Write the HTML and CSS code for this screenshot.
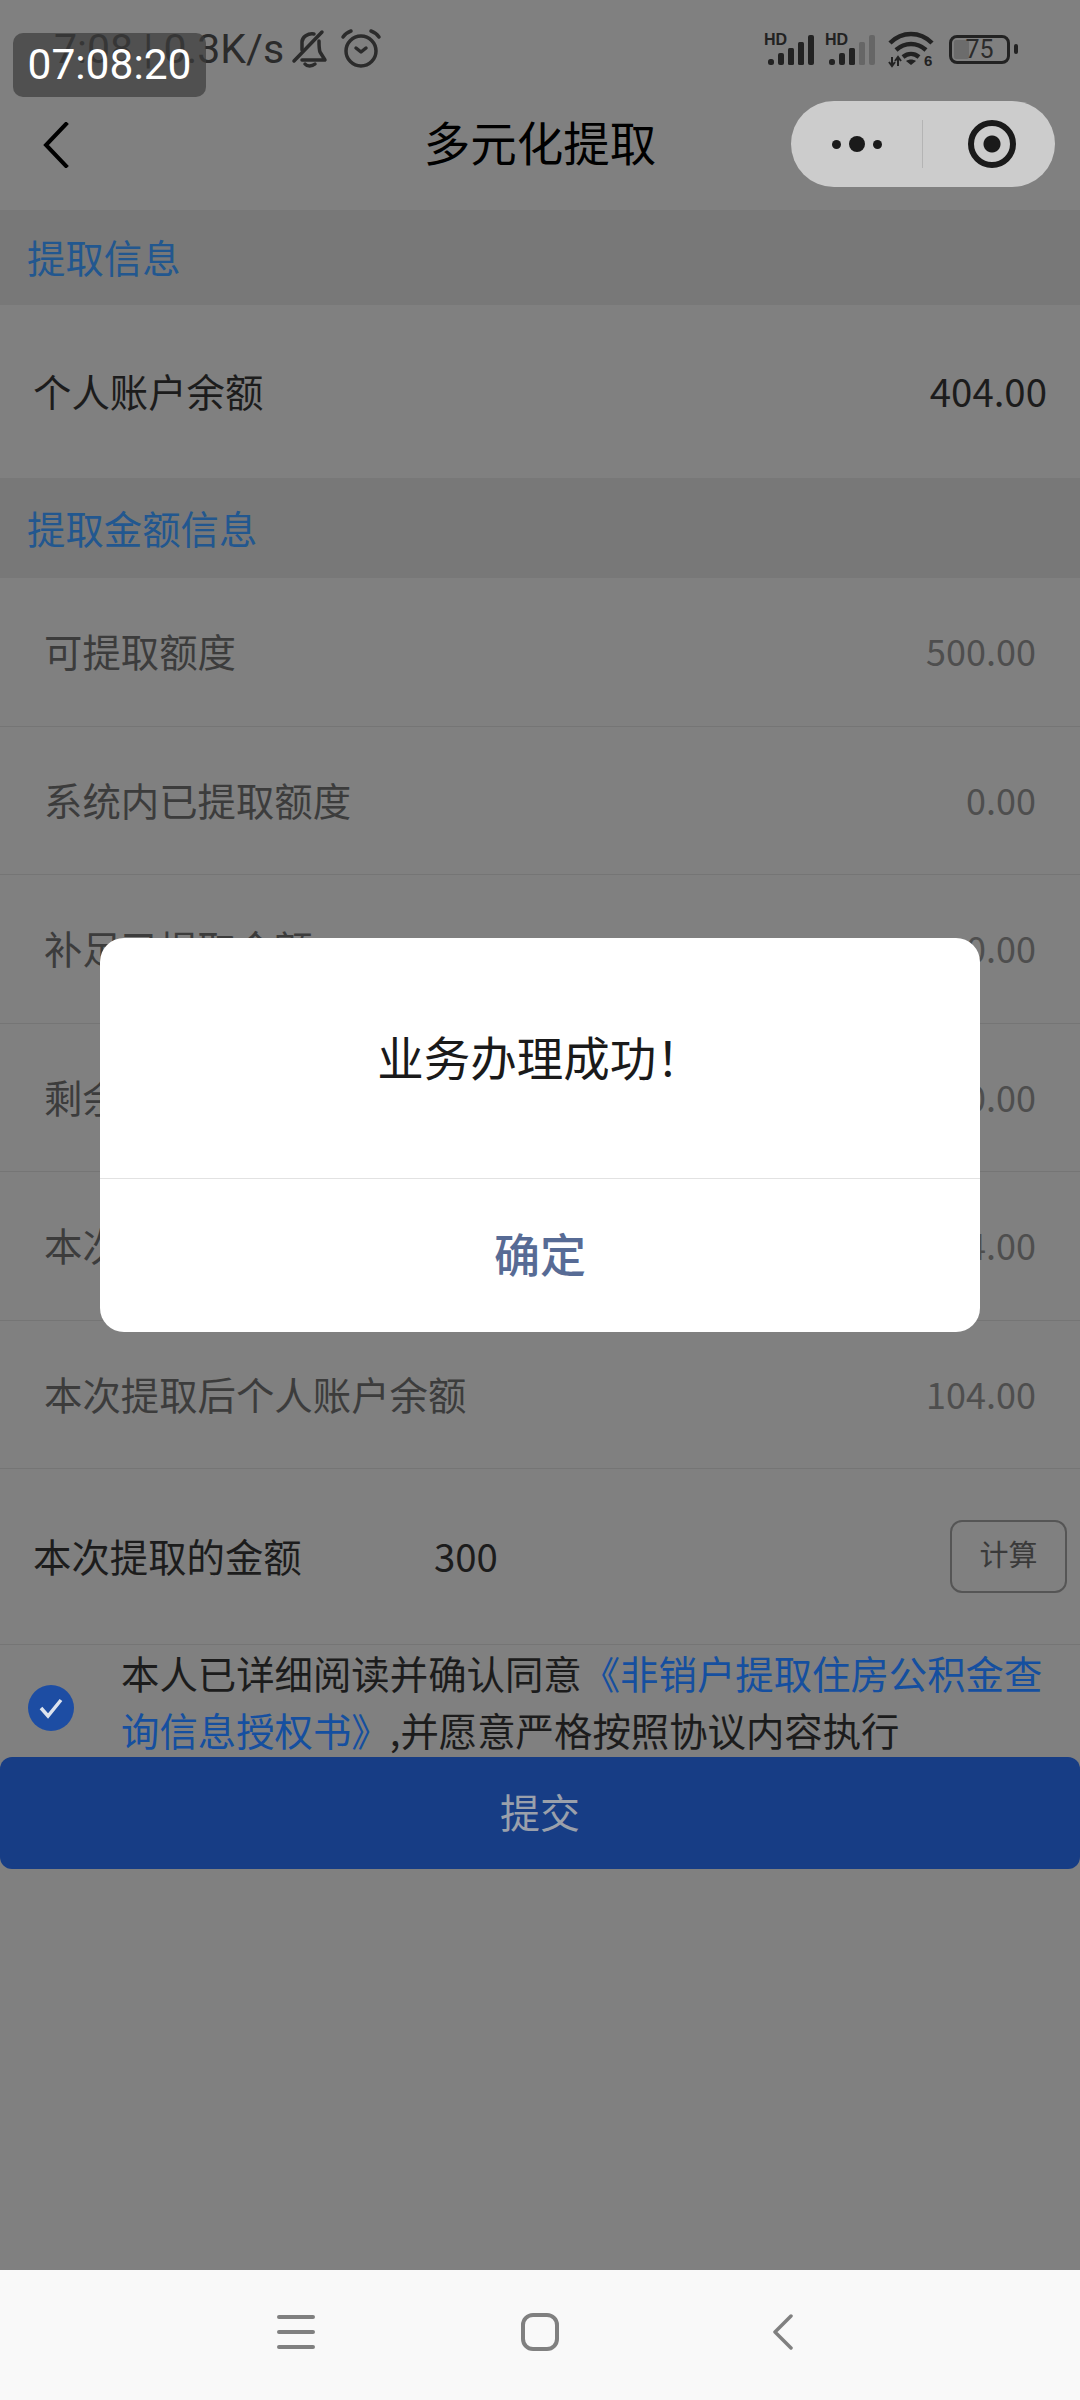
FILE: index.html
```html
<!DOCTYPE html>
<html lang="zh-CN">

<head>
    <meta charset="UTF-8">
    <meta name="viewport" content="width=device-width, initial-scale=1.0">
    <title>多元化提取</title>
    <link rel="stylesheet" href="styles.css">
</head>

<body>
    <div class="page">
        <div class="head">
            <div class="status">
                <div class="status_l">
                    <span class="speed">7:08 | 0.3K/s</span>
                    <svg class="bell" width="36" height="38" viewBox="0 0 36 38" fill="none" stroke="#2b2b2b" stroke-width="3.500" stroke-linecap="round" stroke-linejoin="round">
                        <path d="M10 20v-8c0-5 6-9 12-8"/>
                        <path d="M27 11c0 5 0 8 1 11l5 8H10"/>
                        <path d="M2 31 30 2"/>
                        <path d="M13 34c2 2.500 7 2.500 10 0"/>
                    </svg>
                    <svg class="clock" width="40" height="38" viewBox="0 0 40 38" fill="none" stroke="#2b2b2b" stroke-width="3.500" stroke-linecap="round" stroke-linejoin="round">
                        <circle cx="20" cy="21" r="15"/>
                        <path d="M15 18l5 4 5-4"/>
                        <path d="M2 7c2-3 5-5 8-6M38 7c-2-3-5-5-8-6"/>
                    </svg>
                </div>
                <div class="status_r">
                    <svg width="51" height="32" viewBox="0 0 51 32">
                        <text x="0" y="12" class="hd">HD</text>
                        <rect x="4" y="26" width="6" height="6" rx="2.500" fill="#222"/>
                        <rect x="14" y="20" width="6" height="12" rx="2" fill="#222"/>
                        <rect x="24" y="15" width="6" height="17" rx="1.500" fill="#222"/>
                        <rect x="34" y="9" width="6" height="23" rx="1.500" fill="#222"/>
                        <rect x="44" y="2" width="6" height="30" rx="2" fill="#222"/>
                    </svg>
                    <svg width="51" height="32" viewBox="0 0 51 32">
                        <text x="0" y="12" class="hd">HD</text>
                        <rect x="4" y="26" width="6" height="6" rx="2.500" fill="#222"/>
                        <rect x="14" y="20" width="6" height="12" rx="2" fill="#222"/>
                        <rect x="24" y="15" width="6" height="17" rx="1.500" fill="#222"/>
                        <rect x="34" y="9" width="6" height="23" rx="1.500" fill="#666"/>
                        <rect x="44" y="2" width="6" height="30" rx="2" fill="#666"/>
                    </svg>
                    <svg class="wifi" width="46" height="36" viewBox="0 0 46 36" fill="none" stroke="#222" stroke-width="4.500">
                        <path d="M2 12C14 0 32 0 44 12"/>
                        <path d="M8 19c9-8 21-8 30 0"/>
                        <path d="M15 26c5-4 11-4 16 0"/>
                        <path d="M23 34l-5-4c3-2 7-2 10 0z" fill="#222" stroke="none"/>
                        <path d="M4 26v9M1 31l3 4 3-4M10 35v-9M7 30l3-4 3 4" stroke-width="2"/>
                        <text x="36" y="35" class="six">6</text>
                    </svg>
                    <div class="battery">
                        <div class="battery_box"><i></i><span>75</span></div>
                        <b></b>
                    </div>
                </div>
            </div>
            <div class="nav">
                <svg class="back" width="26" height="46" viewBox="0 0 26 46" fill="none" stroke="#000" stroke-width="4" stroke-linecap="square">
                    <path d="M23 2 3 23l20 21"/>
                </svg>
                <div class="title">多元化提取</div>
            </div>
        </div>

        <div class="section section_a">提取信息</div>
        <div class="row row_big">
            <span>个人账户余额</span>
            <span>404.00</span>
        </div>
        <div class="section section_b">提取金额信息</div>

        <ul class="list">
            <li><span>可提取额度</span><em>500.00</em></li>
            <li><span>系统内已提取额度</span><em>0.00</em></li>
            <li><span>补足已提取金额</span><em>0.00</em></li>
            <li><span>剩余可提取金额</span><em>500.00</em></li>
            <li><span>本次可提取金额</span><em>404.00</em></li>
            <li><span>本次提取后个人账户余额</span><em>104.00</em></li>
        </ul>

        <div class="row row_input">
            <span class="input_label">本次提取的金额</span>
            <span class="input_val">300</span>
            <span class="calc">计算</span>
        </div>

        <div class="agree">
            <svg class="check" width="46" height="46" viewBox="0 0 46 46">
                <circle cx="23" cy="23" r="23" fill="#1d4da3"/>
                <path d="M13 23l7 8 13-16" fill="none" stroke="#dde3ee" stroke-width="3.500"/>
            </svg>
            <p>本人已详细阅读并确认同意<a>《非销户提取住房公积金查询信息授权书》</a>,并愿意严格按照协议内容执行</p>
        </div>

        <div class="submit">提交</div>
    </div>

    <div class="capsule">
        <div class="capsule_l"><i></i><b></b><i></i></div>
        <div class="capsule_r"><span></span></div>
    </div>

    <div class="dialog">
        <div class="dialog_text">业务办理成功！</div>
        <div class="dialog_btn">确定</div>
    </div>

    <div class="timer">07:08:20</div>

    <div class="sysbar">
        <svg width="38" height="36" viewBox="0 0 38 36" stroke="#808080" stroke-width="4" stroke-linecap="round">
            <path d="M2 3h34M2 18h34M2 33h34"/>
        </svg>
        <svg width="38" height="38" viewBox="0 0 38 38" fill="none" stroke="#808080" stroke-width="4">
            <rect x="2" y="2" width="34" height="34" rx="10"/>
        </svg>
        <svg class="sys_back" width="20" height="36" viewBox="0 0 20 36" fill="none" stroke="#808080" stroke-width="3.500" stroke-linecap="round" stroke-linejoin="round">
            <path d="M18 2 2 18l16 16"/>
        </svg>
    </div>
</body>

</html>
```

FILE: styles.css
```css
* {
    margin: 0;
    padding: 0;
    box-sizing: border-box;
}

li {
    list-style: none;
}

em {
    font-style: normal;
}

body {
    position: relative;
    width: 1080px;
    height: 2400px;
    overflow: hidden;
    background-color: #808080;
    font-family: "Noto Sans CJK SC", "Noto Sans", sans-serif;
    font-size: 38.400px;
    color: #1c1c1c;
}

.page {
    display: flex;
    flex-direction: column;
    height: 2270px;
}

.head {
    height: 210px;
}

.status {
    display: flex;
    justify-content: space-between;
    align-items: center;
    height: 98px;
    padding: 0 62px 0 54px;
}

.status svg {
    overflow: visible;
}

.status_l {
    display: flex;
    align-items: center;
    font-family: Roboto, sans-serif;
    font-size: 41px;
    color: #2b2b2b;
}

.bell {
    margin-left: 8px;
}

.clock {
    margin-left: 13px;
}

.status_r {
    display: flex;
    align-items: center;
    gap: 10px;
}

.hd {
    font-family: "Liberation Sans", sans-serif;
    font-size: 16px;
    font-weight: 700;
    fill: #222;
}

.six {
    font-family: "Liberation Sans", sans-serif;
    font-size: 15px;
    font-weight: 700;
    fill: #222;
    stroke: none;
}

.wifi {
    margin-left: 2px;
}

.battery {
    display: flex;
    align-items: center;
    gap: 4px;
    margin-left: 5px;
}

.battery_box {
    position: relative;
    width: 61px;
    height: 29px;
    border: 3px solid #222;
    border-radius: 8px;
    overflow: hidden;
    font-family: Roboto, sans-serif;
    font-size: 25px;
    line-height: 23px;
    text-align: center;
    color: #2b2b2b;
}

.battery_box i {
    position: absolute;
    top: 2px;
    left: 2px;
    width: 15px;
    height: 19px;
    background-color: #6c6c6c;
    border-radius: 2px;
}

.battery_box span {
    position: relative;
}

.battery b {
    width: 4px;
    height: 10px;
    background-color: #222;
    border-radius: 2px;
}

.nav {
    position: relative;
    display: flex;
    justify-content: center;
    align-items: center;
    height: 94px;
    padding-bottom: 10px;
}

.back {
    position: absolute;
    left: 43px;
    top: 24px;
}

.title {
    font-size: 46.500px;
    color: #000;
}

.section {
    display: flex;
    align-items: center;
    padding: 0 0 3px 27px;
    background-color: #787878;
    color: #22578f;
}

.section_a {
    height: 95px;
}

.section_b {
    height: 100px;
}

.row {
    display: flex;
    align-items: center;
    justify-content: space-between;
    padding: 0 33px 3px;
}

.row_big {
    height: 173px;
}

.list li {
    display: flex;
    justify-content: space-between;
    align-items: center;
    height: 148.500px;
    padding: 0 44px 3px;
    border-bottom: 1px solid #757575;
    color: #3c3c3c;
}

.list em {
    color: #4e4e4e;
    font-size: 36px;
}

.row_input {
    justify-content: flex-start;
    height: 176px;
    padding-right: 13px;
    border-bottom: 1px solid #757575;
}

.input_label {
    width: 401px;
}

.input_val {
    flex: 1;
}

.calc {
    width: 117px;
    height: 73px;
    margin-top: 2px;
    border: 2px solid #555;
    border-radius: 12px;
    font-size: 29px;
    line-height: 63px;
    text-align: center;
    color: #3a3a3a;
}

.agree {
    display: flex;
    align-items: center;
    height: 112px;
    padding: 0 30px 0 28px;
}

.check {
    flex-shrink: 0;
    margin: 13px 47px 0 0;
}

.agree p {
    line-height: 57px;
    color: #1c1c1c;
}

.agree a {
    color: #154f9f;
}

.submit {
    height: 112px;
    border-radius: 12px;
    background-color: #173d85;
    font-size: 40px;
    line-height: 108px;
    text-align: center;
    color: #9aa0ab;
}

.capsule {
    position: absolute;
    top: 101px;
    left: 791px;
    display: flex;
    align-items: center;
    width: 264px;
    height: 86px;
    border-radius: 43px;
    background-color: #ccc;
}

.capsule_l {
    display: flex;
    justify-content: center;
    align-items: center;
    gap: 8px;
    width: 132px;
    height: 48px;
    border-right: 1px solid #b4b4b4;
}

.capsule_l i {
    width: 9px;
    height: 9px;
    border-radius: 50%;
    background-color: #1a1a1a;
}

.capsule_l b {
    width: 16px;
    height: 16px;
    border-radius: 50%;
    background-color: #1a1a1a;
}

.capsule_r {
    flex: 1;
    display: flex;
    justify-content: center;
    padding-left: 6px;
}

.capsule_r span {
    display: block;
    width: 48px;
    height: 48px;
    border: 6px solid #1a1a1a;
    border-radius: 50%;
    background: radial-gradient(circle, #1a1a1a 8px, #ccc 9px);
}

.dialog {
    position: absolute;
    top: 938px;
    left: 100px;
    width: 880px;
    height: 394px;
    border-radius: 24px;
    background-color: #fff;
    overflow: hidden;
}

.dialog_text {
    display: flex;
    justify-content: center;
    align-items: center;
    height: 241px;
    padding-bottom: 6px;
    border-bottom: 1px solid #e2e2e2;
    font-size: 46.500px;
    color: #1a1a1a;
}

.dialog_btn {
    height: 153px;
    font-size: 46px;
    font-weight: 500;
    line-height: 147px;
    text-align: center;
    color: #576b95;
}

.timer {
    position: absolute;
    top: 33px;
    left: 13px;
    width: 193px;
    height: 64px;
    border-radius: 10px;
    background-color: rgba(60, 60, 60, .7);
    font-family: Roboto, sans-serif;
    font-size: 42.500px;
    line-height: 64px;
    text-align: center;
    color: #fff;
}

.sysbar {
    position: absolute;
    bottom: 0;
    left: 0;
    display: flex;
    align-items: center;
    gap: 206px;
    width: 100%;
    height: 130px;
    padding: 0 0 6px 277px;
    background-color: #f9f9f9;
}

.sys_back {
    margin-left: 8px;
}
```
